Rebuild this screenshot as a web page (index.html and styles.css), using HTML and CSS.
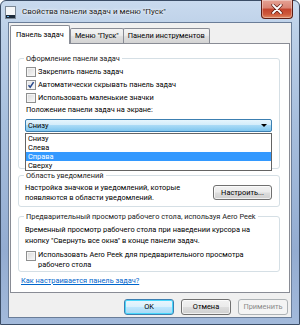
FILE: index.html
```html
<!DOCTYPE html>
<html lang="ru">
<head>
<meta charset="utf-8">
<link rel="stylesheet" href="styles.css">
</head>
<body>
<div class="window">
  <div class="titlebar">
    <svg class="appicon" width="11" height="13" viewBox="0 0 11 13">
      <rect x="0.5" y="0.5" width="10" height="12" fill="#f4f6f8" stroke="#7b8896"/>
      <rect x="1" y="9" width="9" height="3" fill="#1d2a3a"/>
      <rect x="2" y="10" width="2" height="1" fill="#6db4e8"/>
    </svg>
    <span class="title">Свойства панели задач и меню "Пуск"</span>
    <div class="close">
      <svg width="12" height="10" viewBox="0 0 12 10">
        <path d="M2 1 L10 9 M10 1 L2 9" stroke="#5a1a12" stroke-width="3.2" stroke-linecap="round"/>
        <path d="M2 1 L10 9 M10 1 L2 9" stroke="#ffffff" stroke-width="1.8" stroke-linecap="round"/>
      </svg>
    </div>
  </div>
  <div class="client">
    <div class="tabs">
      <div class="tab active">Панель задач</div>
      <div class="tab">Меню "Пуск"</div>
      <div class="tab">Панели инструментов</div>
    </div>
    <div class="panel">
      <fieldset class="group g1">
        <legend>Оформление панели задач</legend>
        <div class="check"><span class="box"></span><span>Закрепить панель задач</span></div>
        <div class="check"><span class="box checked"><svg width="8" height="8" viewBox="0 0 8 8"><path d="M1.5 4.2 L3.2 6.2 L6.6 1.2" fill="none" stroke="#2b4a8c" stroke-width="1.5"/></svg></span><span>Автоматически скрывать панель задач</span></div>
        <div class="check"><span class="box"></span><span>Использовать маленькие значки</span></div>
        <div class="field-label">Положение панели задач на экране:</div>
        <div class="combo-wrap">
          <div class="combo"><span class="combo-text">Снизу</span><span class="arrow"></span></div>
          <ul class="dropdown">
            <li>Снизу</li>
            <li>Слева</li>
            <li class="sel">Справа</li>
            <li>Сверху</li>
          </ul>
        </div>
        <div class="spacer"></div>
      </fieldset>
      <fieldset class="group g2">
        <legend>Область уведомлений</legend>
        <div class="row">
          <p class="desc">Настройка значков и уведомлений, которые<br>появляются в области уведомлений.</p>
          <button class="btn">Настроить...</button>
        </div>
      </fieldset>
      <fieldset class="group g3">
        <legend>Предварительный просмотр рабочего стола, используя Aero Peek</legend>
        <p class="desc">Временный просмотр рабочего стола при наведении курсора на<br>кнопку "Свернуть все окна" в конце панели задач.</p>
        <div class="check two"><span class="box"></span><span>Использовать Aero Peek для предварительного просмотра<br>рабочего стола</span></div>
      </fieldset>
      <a class="link" href="#">Как настраивается панель задач?</a>
    </div>
    <div class="footer">
      <button class="btn default">OK</button>
      <button class="btn">Отмена</button>
      <button class="btn disabled">Применить</button>
    </div>
  </div>
</div>
</body>
</html>
```
FILE: styles.css
```css
* { box-sizing: border-box; }
html, body { margin: 0; padding: 0; }
body {
  width: 300px;
  height: 325px;
  overflow: hidden;
  font-family: Roboto, "Liberation Sans", sans-serif;
  font-size: 7.4px;
  color: #000;
}
.window {
  width: 300px;
  height: 325px;
  border: 1px solid #3b4d66;
  border-radius: 6px 6px 0 0;
  background: linear-gradient(to bottom, #c9daee 0px, #bcd0e8 30px, #a7bfdd 120px, #93acd1 250px, #a3badb 325px);
  padding: 0 7px 6px 7px;
  display: flex;
  flex-direction: column;
}
.titlebar {
  height: 21px;
  display: flex;
  align-items: center;
  position: relative;
}
.appicon { margin: 1px 0 0 -3px; flex: none; }
.title {
  margin-left: 6px;
  font-size: 8px;
  color: #1a1a1a;
  text-shadow: 0 0 4px #fff, 0 0 2px #fff;
}
.close {
  position: absolute;
  right: -1px;
  top: -1px;
  width: 32px;
  height: 19px;
  border: 1px solid #5d1d14;
  border-top: none;
  border-radius: 0 0 4px 4px;
  background: linear-gradient(to bottom, #e5a294 0%, #d98372 45%, #c3432c 50%, #cf5a3c 80%, #e08a63 100%);
  box-shadow: inset 0 0 0 1px rgba(255,255,255,0.35);
  display: flex;
  align-items: center;
  justify-content: center;
}
.client {
  flex: 1;
  background: #f0f0f0;
  border: 1px solid #6a7d98;
  padding: 1px 1px 0 1px;
  display: flex;
  flex-direction: column;
}
.tabs {
  display: flex;
  align-items: flex-end;
  height: 19px;
  position: relative;
  z-index: 2;
}
.tab {
  height: 15px;
  line-height: 13px;
  padding: 0 4px;
  border: 1px solid #898c95;
  border-bottom: none;
  border-radius: 2px 2px 0 0;
  background: linear-gradient(to bottom, #f4f4f4 0%, #ececec 45%, #dedede 55%, #d4d4d4 100%);
  margin-left: -1px;
  white-space: nowrap;
}
.tab.active {
  height: 19px;
  line-height: 17px;
  background: #fff;
  margin-left: 0;
  padding: 0 5px;
  position: relative;
  z-index: 3;
  margin-bottom: -1px;
}
.tab.active + .tab { margin-left: 0; }
.panel {
  background: #fff;
  border: 1px solid #898c95;
  height: 250px;
  padding: 9px 9px 0 7px;
  display: flex;
  flex-direction: column;
  align-items: flex-start;
}
.group {
  margin: 0;
  width: 262px;
  border: 1px solid #d5dfe5;
  border-radius: 3px;
  padding: 1px 7px 0 7px;
  min-inline-size: 0;
}
.group legend {
  padding: 0 2px;
  margin-left: -2px;
  line-height: 11px;
  color: #1a1a1a;
}
.check {
  display: flex;
  align-items: center;
  height: 13px;
  line-height: 11px;
}
.box {
  width: 10px;
  height: 10px;
  flex: none;
  border: 1px solid #8e8f8f;
  background: linear-gradient(135deg, #d9d9d9, #f9f9f9);
  box-shadow: inset 0 0 0 1px #f4f4f4;
  margin-right: 2px;
  display: flex;
  align-items: center;
  justify-content: center;
}
.box.checked { background: linear-gradient(135deg, #e4e4e4, #fbfbfb); }
.field-label { line-height: 11px; height: 11px; }
.combo-wrap { position: relative; margin: 4px 0 0 -1px; }
.combo {
  width: 247px;
  height: 13px;
  border: 1px solid #3c7fb1;
  border-radius: 2px;
  background: linear-gradient(to bottom, #e6f5fd 0%, #d3ecfa 45%, #a9daf6 50%, #7fc6ef 100%);
  display: flex;
  align-items: center;
  justify-content: space-between;
  padding: 0 4px 0 2px;
}
.combo-text { line-height: 10px; }
.arrow {
  width: 0; height: 0;
  border-left: 3px solid transparent;
  border-right: 3px solid transparent;
  border-top: 3px solid #000;
}
.dropdown {
  position: absolute;
  left: 0;
  top: 14px;
  width: 247px;
  margin: 0;
  padding: 0;
  list-style: none;
  background: #fff;
  border: 1px solid #646464;
  z-index: 5;
}
.dropdown li {
  height: 9px;
  line-height: 9px;
  padding-left: 2px;
}
.dropdown li.sel { background: #3399ff; color: #fff; }
.spacer { height: 36px; }
.g2 { margin-top: 1px; padding-bottom: 3px; }
.row {
  display: flex;
  align-items: center;
  justify-content: space-between;
}
.desc {
  margin: 0;
  line-height: 10px;
}
.g2 .desc { margin-left: -1px; padding-top: 1px; }
.g3 { margin-top: 4px; padding-top: 2px; padding-bottom: 1px; }
.g3 .desc { line-height: 11px; margin-left: -1px; }
.check.two {
  height: auto;
  align-items: flex-start;
  margin-top: 4px;
  line-height: 10px;
}
.check.two .box { margin-top: 1px; }
.link {
  margin: 3px 0 0 3px;
  line-height: 11px;
  color: #0066cc;
  text-decoration: underline;
}
.btn {
  font: inherit;
  height: 15px;
  padding: 0 4px;
  border: 1px solid #707070;
  border-radius: 3px;
  background: linear-gradient(to bottom, #f2f2f2 0%, #ebebeb 48%, #dddddd 52%, #cfcfcf 100%);
  box-shadow: inset 0 0 0 1px rgba(255,255,255,0.7);
  color: #000;
  line-height: 12px;
}
.g2 .btn { width: 59px; }
.footer {
  display: flex;
  justify-content: flex-end;
  gap: 7px;
  padding: 6px 2px 0 0;
}
.footer .btn { width: 50px; height: 16px; }
.btn.default {
  border-color: #3c7fb1;
  background: linear-gradient(to bottom, #eaf6fd 0%, #d9f0fc 48%, #bee6fd 52%, #a7d9f5 100%);
  box-shadow: inset 0 0 0 1px #48d7fb;
}
.btn.disabled {
  border-color: #adb2b5;
  background: #f4f4f4;
  color: #8a8a8a;
  box-shadow: none;
}
```
